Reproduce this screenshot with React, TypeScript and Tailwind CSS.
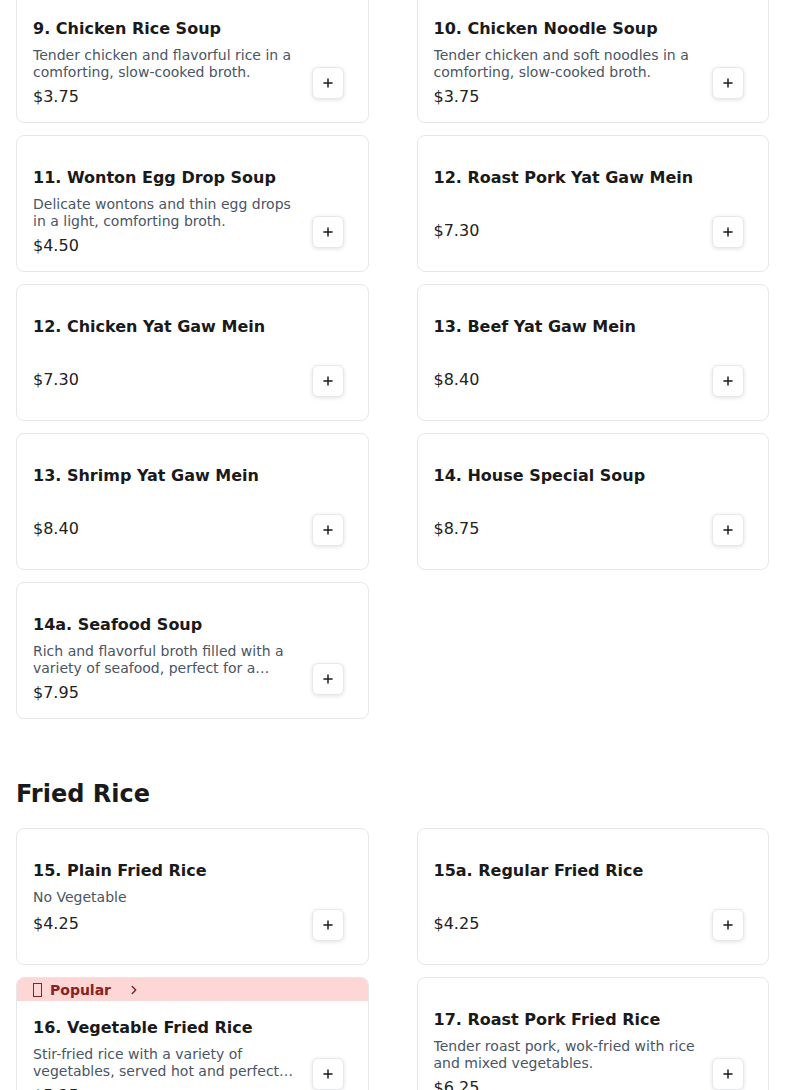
import { Plus, ChevronRight } from "lucide-react";

interface Item {
  name: string;
  desc?: string;
  price: string;
  popular?: boolean;
}

const soups: Item[] = [
  { name: "9. Chicken Rice Soup", desc: "Tender chicken and flavorful rice in a comforting, slow-cooked broth.", price: "$3.75" },
  { name: "10. Chicken Noodle Soup", desc: "Tender chicken and soft noodles in a comforting, slow-cooked broth.", price: "$3.75" },
  { name: "11. Wonton Egg Drop Soup", desc: "Delicate wontons and thin egg drops in a light, comforting broth.", price: "$4.50" },
  { name: "12. Roast Pork Yat Gaw Mein", price: "$7.30" },
  { name: "12. Chicken Yat Gaw Mein", price: "$7.30" },
  { name: "13. Beef Yat Gaw Mein", price: "$8.40" },
  { name: "13. Shrimp Yat Gaw Mein", price: "$8.40" },
  { name: "14. House Special Soup", price: "$8.75" },
  { name: "14a. Seafood Soup", desc: "Rich and flavorful broth filled with a variety of seafood, perfect for a hearty, warming meal.", price: "$7.95" },
];

const friedRice: Item[] = [
  { name: "15. Plain Fried Rice", desc: "No Vegetable", price: "$4.25" },
  { name: "15a. Regular Fried Rice", price: "$4.25" },
  { name: "16. Vegetable Fried Rice", desc: "Stir-fried rice with a variety of vegetables, served hot and perfect for any meal.", price: "$5.25", popular: true },
  { name: "17. Roast Pork Fried Rice", desc: "Tender roast pork, wok-fried with rice and mixed vegetables.", price: "$6.25" },
];

function MenuCard({ item }: { item: Item }) {
  return (
    <div className="h-[137px] flex flex-col overflow-hidden rounded-lg border border-gray-200 bg-white">
      {item.popular && (
        <div className="h-[23px] shrink-0 flex items-center gap-2 px-4 bg-[#fdd6d6] text-[#8a2222] text-sm font-bold">
          <span className="inline-block h-[14px] w-[9px] border border-current" />
          <span>Popular</span>
          <ChevronRight className="ml-2 h-3.5 w-3.5" strokeWidth={2.5} />
        </div>
      )}
      <div className="flex flex-1 min-h-0 gap-4 pl-4 pr-6">
        <div className={`flex-1 min-w-0 flex flex-col ${item.popular ? "pt-[15px]" : "pt-[30px]"}`}>
          <h3 className="text-base leading-6 font-bold text-[#1a1a1a]">{item.name}</h3>
          <p className="mt-[6px] min-h-[19px] text-sm leading-[17px] text-gray-600 line-clamp-2">{item.desc}</p>
          <p className="mt-[4px] text-base leading-6 text-[#222222]">{item.price}</p>
        </div>
        <div className="flex items-end pb-[23px]">
          <button className="h-8 w-8 flex items-center justify-center rounded-md border border-gray-200 bg-white text-[#1a1a1a] shadow-[0_1px_4px_rgba(0,0,0,0.12)]">
            <Plus className="h-3.5 w-3.5" strokeWidth={2.5} />
          </button>
        </div>
      </div>
    </div>
  );
}

export default function App() {
  return (
    <div className="min-h-screen bg-white px-4 font-['DejaVu_Sans',sans-serif]">
      <div className="-mt-[14px] grid grid-cols-2 gap-x-12 gap-y-3">
        {soups.map((item, i) => (
          <MenuCard key={i} item={item} />
        ))}
      </div>
      <section className="mt-[59px]">
        <h2 className="mb-[18px] text-2xl leading-8 font-bold text-[#1a1a1a]">Fried Rice</h2>
        <div className="grid grid-cols-2 gap-x-12 gap-y-3">
          {friedRice.map((item, i) => (
            <MenuCard key={i} item={item} />
          ))}
        </div>
      </section>
    </div>
  );
}
